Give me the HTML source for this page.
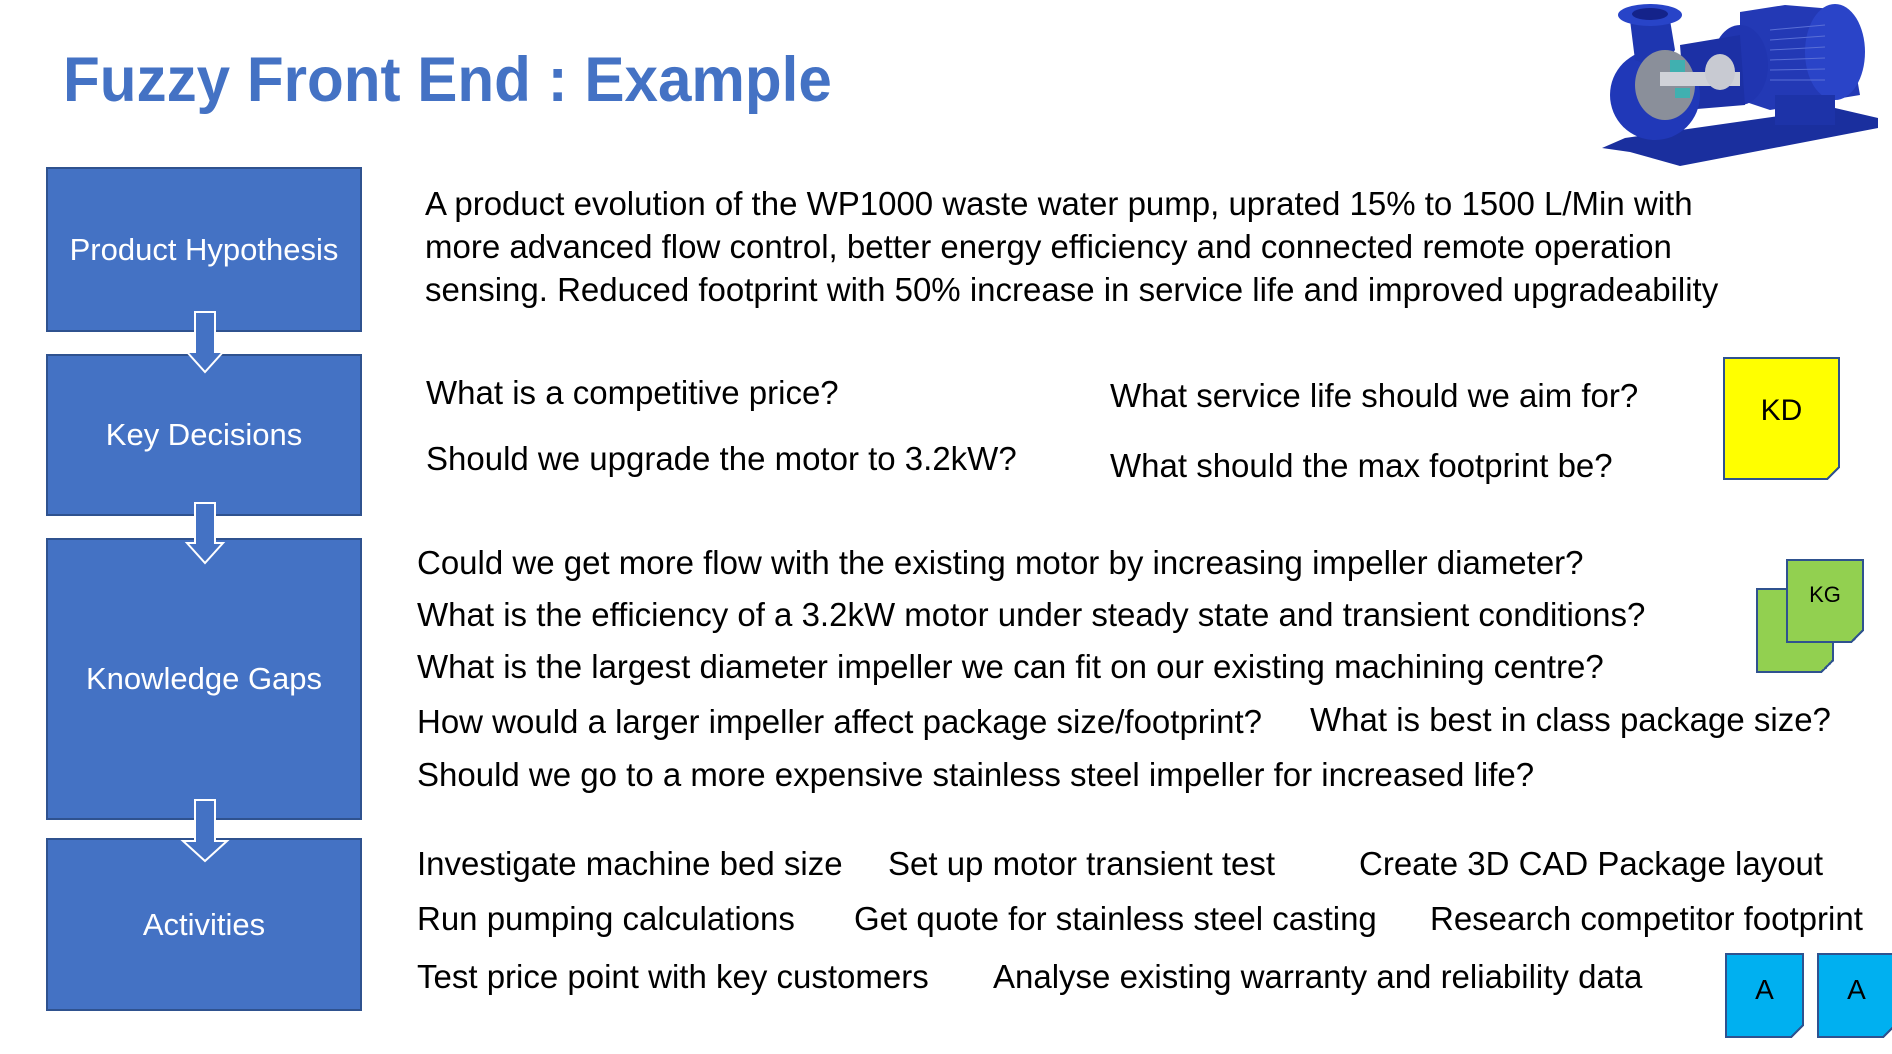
<!DOCTYPE html>
<html><head><meta charset="utf-8"><style>
html,body{margin:0;padding:0;background:#fff;}
body{width:1892px;height:1054px;position:relative;overflow:hidden;font-family:"Liberation Sans",sans-serif;}
.t{position:absolute;font-size:33px;line-height:36px;color:#000;white-space:nowrap;}
.box{position:absolute;left:46px;width:316px;background:#4472C4;border:2px solid #2F528F;box-sizing:border-box;color:#fff;font-size:31px;display:flex;align-items:center;justify-content:center;}
.note{position:absolute;box-sizing:border-box;border:2.5px solid #2F528F;display:flex;align-items:center;justify-content:center;color:#000;}
.note:after{content:"";position:absolute;right:-2px;bottom:-2px;width:16px;height:14px;background:linear-gradient(135deg,transparent 50%,#2F528F 50%,#2F528F 60%,#fff 60%);}
</style></head><body>
<div style="position:absolute;left:63px;top:40px;font-size:63px;font-weight:bold;color:#4472C4;line-height:80px;white-space:nowrap;transform:scaleX(0.955);transform-origin:left top;">Fuzzy Front End : Example</div>

<svg style="position:absolute;left:1590px;top:0" width="302" height="170" viewBox="0 0 302 170">
<polygon points="12,148 35,138 245,108 288,118 288,128 90,166 40,152" fill="#1a2f9e"/>
<polygon points="150,12 195,5 255,10 270,95 180,110 150,100" fill="#2339b5"/>
<ellipse cx="245" cy="52" rx="30" ry="48" fill="#2a44c8"/>
<g stroke="#5a6fd6" stroke-width="1"><line x1="180" y1="30" x2="235" y2="25"/><line x1="180" y1="40" x2="235" y2="36"/><line x1="180" y1="50" x2="235" y2="47"/><line x1="180" y1="60" x2="235" y2="58"/><line x1="180" y1="70" x2="235" y2="69"/><line x1="180" y1="80" x2="235" y2="80"/></g>
<rect x="185" y="95" width="60" height="30" fill="#1d33a8"/>
<ellipse cx="150" cy="65" rx="28" ry="40" fill="#2035b0"/>
<polygon points="90,45 150,35 155,105 95,110" fill="#1c30a5"/>
<ellipse cx="65" cy="95" rx="45" ry="45" fill="#2038b8"/>
<path d="M40,20 L80,20 L85,50 L70,70 L45,60 Z" fill="#1e36b0"/>
<ellipse cx="60" cy="15" rx="32" ry="11" fill="#2844c8"/>
<ellipse cx="60" cy="14" rx="18" ry="6" fill="#14238a"/>
<ellipse cx="75" cy="85" rx="30" ry="35" fill="#8a8f9a"/>
<rect x="70" y="72" width="80" height="14" fill="#d0d2d8"/>
<ellipse cx="130" cy="72" rx="15" ry="18" fill="#c8cad2"/>
<polygon points="80,60 95,60 95,72 80,72" fill="#40b0b0"/>
<polygon points="85,88 100,88 100,98 85,98" fill="#40b0b0"/>
</svg>

<div class="box" style="top:167px;height:165px;">Product Hypothesis</div>
<div class="box" style="top:354px;height:162px;">Key Decisions</div>
<div class="box" style="top:538px;height:282px;">Knowledge Gaps</div>
<div class="box" style="top:838px;height:173px;">Activities</div>

<svg style="position:absolute;left:0;top:0" width="400" height="1054">
<g fill="#4472C4" stroke="#fff" stroke-width="2">
<polygon points="195,312 215,312 215,352 223,352 205,372 187,352 195,352"/>
<polygon points="195,503 215,503 215,543 223,543 205,563 187,543 195,543"/>
<polygon points="195,800 215,800 215,841 227,841 205,861 183,841 195,841"/>
</g>
</svg>

<div class="t" style="left:425px;top:186px;">A product evolution of the WP1000 waste water pump, uprated 15% to 1500 L/Min with</div>
<div class="t" style="left:425px;top:229px;">more advanced flow control, better energy efficiency and connected remote operation</div>
<div class="t" style="left:425px;top:272px;">sensing. Reduced footprint with 50% increase in service life and improved upgradeability</div>

<div class="t" style="left:426px;top:375px;">What is a competitive price?</div>
<div class="t" style="left:426px;top:441px;">Should we upgrade the motor to 3.2kW?</div>
<div class="t" style="left:1110px;top:378px;">What service life should we aim for?</div>
<div class="t" style="left:1110px;top:448px;">What should the max footprint be?</div>

<div class="t" style="left:417px;top:545px;">Could we get more flow with the existing motor by increasing impeller diameter?</div>
<div class="t" style="left:417px;top:597px;">What is the efficiency of a 3.2kW motor under steady state and transient conditions?</div>
<div class="t" style="left:417px;top:649px;">What is the largest diameter impeller we can fit on our existing machining centre?</div>
<div class="t" style="left:417px;top:704px;">How would a larger impeller affect package size/footprint?</div>
<div class="t" style="left:1310px;top:702px;">What is best in class package size?</div>
<div class="t" style="left:417px;top:757px;">Should we go to a more expensive stainless steel impeller for increased life?</div>

<div class="t" style="left:417px;top:846px;">Investigate machine bed size</div>
<div class="t" style="left:888px;top:846px;">Set up motor transient test</div>
<div class="t" style="left:1359px;top:846px;">Create 3D CAD Package layout</div>
<div class="t" style="left:417px;top:901px;">Run pumping calculations</div>
<div class="t" style="left:854px;top:901px;">Get quote for stainless steel casting</div>
<div class="t" style="left:1430px;top:901px;">Research competitor footprint</div>
<div class="t" style="left:417px;top:959px;">Test price point with key customers</div>
<div class="t" style="left:993px;top:959px;">Analyse existing warranty and reliability data</div>

<div class="note" style="left:1723px;top:357px;width:117px;height:123px;background:#FFFF00;font-size:30px;padding-bottom:16px;">KD</div>
<div class="note" style="left:1756px;top:588px;width:78px;height:85px;background:#92D050;"></div>
<div class="note" style="left:1786px;top:559px;width:78px;height:84px;background:#92D050;font-size:22px;padding-bottom:12px;">KG</div>
<div class="note" style="left:1725px;top:953px;width:79px;height:85px;background:#00B0F0;font-size:28px;padding-bottom:12px;">A</div>
<div class="note" style="left:1817px;top:953px;width:79px;height:85px;background:#00B0F0;font-size:28px;padding-bottom:12px;">A</div>
</body></html>
